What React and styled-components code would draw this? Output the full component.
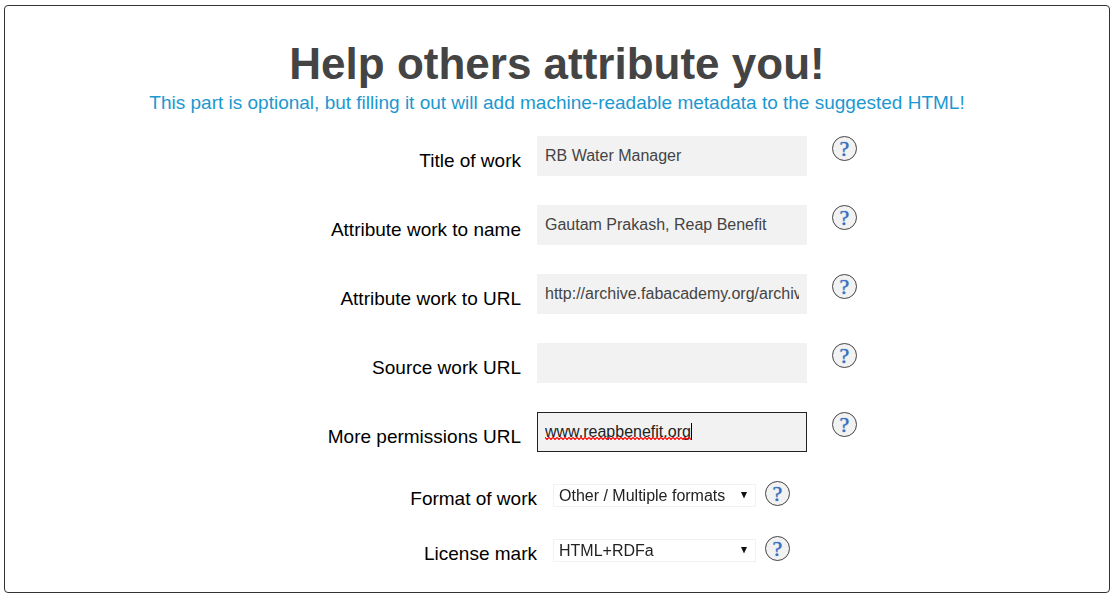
import { useState } from 'react';
import styled, { createGlobalStyle } from 'styled-components';

const GlobalStyle = createGlobalStyle`
    *, *::before, *::after {
        box-sizing:border-box;
    }
    body {
        margin:5px 7px 6px 4px;
        background:#fff;
        font-family:'Liberation Sans', Arial, sans-serif;
    }
`;

const Panel = styled.form`
    padding:32px 0 27px;
    border:1px solid #333;
    border-radius:4px;
`;

const Heading = styled.h1`
    margin:0;
    color:#444;
    font-size:44px;
    line-height:52px;
    text-align:center;
`;

const Intro = styled.p`
    margin:0;
    padding-bottom:20px;
    color:#1b98d0;
    font-size:19px;
    line-height:26px;
    text-align:center;
`;

const Row = styled.div`
    display:grid;
    grid-template-columns:calc(50% - ${props => props.$compact ? 20 : 36}px) 1fr;
    column-gap:16px;
    margin-bottom:${props => props.$compact ? 26 : 29}px;

    &:last-child {
        margin-bottom:0;
    }
`;

const Label = styled.label`
    padding-top:${props => props.$compact ? 7 : 14}px;
    color:#000;
    font-size:19px;
    line-height:22px;
    text-align:right;
`;

const Control = styled.div`
    display:flex;
    align-items:flex-start;
    gap:${props => props.$compact ? 9 : 25}px;
`;

const InputBox = styled.div`
    position:relative;
    width:270px;
`;

const TextInput = styled.input`
    display:block;
    width:100%;
    height:40px;
    padding:0 7px;
    border:1px solid #f2f2f2;
    border-radius:0;
    outline:none;
    background:#f2f2f2;
    color:#444;
    caret-color:transparent;
    font-family:inherit;
    font-size:16px;

    &:focus {
        border-color:#222;
        color:#222;
    }
`;

const Caret = styled.span`
    position:absolute;
    top:11px;
    width:1px;
    height:17px;
    background:#000;
    pointer-events:none;
`;

const Squiggle = styled.svg`
    position:absolute;
    top:25px;
    left:8px;
    pointer-events:none;
`;

const SelectBox = styled.div`
    position:relative;
    width:203px;
    margin-top:3px;

    svg {
        position:absolute;
        top:8px;
        right:8px;
        pointer-events:none;
    }
`;

const Select = styled.select`
    display:block;
    width:100%;
    height:23px;
    padding:0 20px 0 5px;
    border:1px solid #f2f2f2;
    border-radius:0;
    appearance:none;
    background:#fff;
    color:#222;
    font-family:inherit;
    font-size:16px;
`;

const HelpButton = styled.button`
    flex:none;
    width:25px;
    height:25px;
    padding:0;
    border:1px solid #444;
    border-radius:50%;
    background:#f2f2f2;
    color:#3a70c0;
    font-family:'Liberation Serif', 'Times New Roman', serif;
    font-size:22px;
    line-height:22px;
    text-shadow:0 0 1px #3a70c0;
    cursor:pointer;
`;

const textFields = [
    { name: 'title', label: 'Title of work' },
    { name: 'attributionName', label: 'Attribute work to name' },
    { name: 'attributionUrl', label: 'Attribute work to URL' },
    { name: 'sourceUrl', label: 'Source work URL' },
    { name: 'morePermissionsUrl', label: 'More permissions URL', autoFocus: true },
];

const selectFields = [
    { name: 'format', label: 'Format of work', options: ['Other / Multiple formats', 'Audio', 'Video', 'Image', 'Text'] },
    { name: 'mark', label: 'License mark', options: ['HTML+RDFa', 'XMP'] },
];

// width of the typed text, never more than the inside of the input
const typedWidth = (text) => {
    const context = document.createElement('canvas').getContext('2d');
    context.font = "16px 'Liberation Sans', Arial, sans-serif";
    return Math.min(Math.round(context.measureText(text).width), 253);
};

const TypingMarks = (props) => {
    const width = typedWidth(props.text);

    return (
        <>
            <Squiggle width={width} height='3'>
                <defs>
                    <pattern id='wave' width='4' height='3' patternUnits='userSpaceOnUse'>
                        <path d='M-1 1.5L0 0.5L2 2.5L4 0.5L5 1.5' fill='none' stroke='#f00' strokeWidth='1.2' />
                    </pattern>
                </defs>
                <rect width={width} height='3' fill='url(#wave)' />
            </Squiggle>
            <Caret style={{ left: width + 8 }} />
        </>
    );
}

const App = () => {
    const [focused, setFocused] = useState('morePermissionsUrl');
    const [values, setValues] = useState({
        title: 'RB Water Manager',
        attributionName: 'Gautam Prakash, Reap Benefit',
        attributionUrl: 'http://archive.fabacademy.org/archives',
        sourceUrl: '',
        morePermissionsUrl: 'www.reapbenefit.org',
        format: 'Other / Multiple formats',
        mark: 'HTML+RDFa',
    });

    const onChangeValue = (e) => {
        setValues({ ...values, [e.target.name]: e.target.value });
    };

    return (
        <>
            <GlobalStyle />
            <Panel>
                <Heading>Help others attribute you!</Heading>
                <Intro>This part is optional, but filling it out will add machine-readable metadata to the suggested HTML!</Intro>
                {textFields.map(field => (
                    <Row key={field.name}>
                        <Label htmlFor={field.name}>{field.label}</Label>
                        <Control>
                            <InputBox>
                                <TextInput
                                    type='text'
                                    id={field.name}
                                    name={field.name}
                                    value={values[field.name]}
                                    autoFocus={field.autoFocus}
                                    spellCheck={false}
                                    autoComplete='off'
                                    onChange={onChangeValue}
                                    onFocus={() => setFocused(field.name)}
                                />
                                {focused === field.name && <TypingMarks text={values[field.name]} />}
                            </InputBox>
                            <HelpButton type='button'>?</HelpButton>
                        </Control>
                    </Row>
                ))}
                {selectFields.map(field => (
                    <Row key={field.name} $compact>
                        <Label htmlFor={field.name} $compact>{field.label}</Label>
                        <Control $compact>
                            <SelectBox>
                                <Select id={field.name} name={field.name} value={values[field.name]} onChange={onChangeValue}>
                                    {field.options.map(option => <option key={option}>{option}</option>)}
                                </Select>
                                <svg width='8' height='7' viewBox='0 0 8 7'>
                                    <path d='M1 0h6L4 6.5z' fill='#111' />
                                </svg>
                            </SelectBox>
                            <HelpButton type='button'>?</HelpButton>
                        </Control>
                    </Row>
                ))}
            </Panel>
        </>
    );
}

export default App;
